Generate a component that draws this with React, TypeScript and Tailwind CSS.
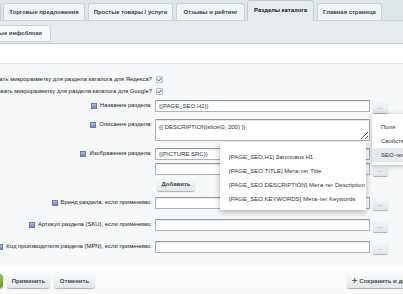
import React from "react";

function Hint() {
  return (
    <span className="inline-block w-[6px] h-[6px] mr-[3px] shrink-0 border border-[#6d79b5] bg-gradient-to-b from-[#b4bdea] to-[#7481c6]" />
  );
}

function Check() {
  return (
    <div className="w-[7px] h-[7px] ml-[1px] rounded-[1px] border border-[#b7bec2] bg-[#eceff0] flex items-center justify-center">
      <svg width="5" height="5" viewBox="0 0 5 5">
        <path d="M0.6 2.5 L2 3.9 L4.5 0.9" fill="none" stroke="#55606a" strokeWidth="1" />
      </svg>
    </div>
  );
}

function Dots() {
  return (
    <div className="w-[15px] h-[13px] ml-[3px] shrink-0 self-center rounded-[2px] bg-gradient-to-b from-[#f8fafa] to-[#e0e5e7] shadow-[0_1px_1px_rgba(0,0,0,0.3)] flex items-center justify-center text-[6px] leading-none text-[#6b767c]">
      ...
    </div>
  );
}

function Field({ value = "" }: { value?: string }) {
  return (
    <input
      readOnly
      value={value}
      className="block w-[215px] h-[12px] border border-[#aab3b8] border-t-[#939ea4] bg-white rounded-[1px] px-[3px] text-[6px] text-[#333] shadow-[inset_0_1px_1px_rgba(0,0,0,0.1)] outline-none"
    />
  );
}

function Label({ children, icon = true }: { children: React.ReactNode; icon?: boolean }) {
  return (
    <div className="w-[152px] shrink-0 flex justify-end items-center whitespace-nowrap text-[5.9px] leading-[9px] text-[#222] pt-[1px]">
      {icon && <Hint />}
      <span>{children}</span>
    </div>
  );
}

export default function App() {
  return (
    <div className="w-[403px] h-[294px] overflow-hidden relative bg-[#eef1f2] font-['Liberation_Sans',Arial,sans-serif]">
      {/* tab bar */}
      <div className="h-[21px] bg-[#dfe6e9] border-b border-[#cbd4d8] flex items-end whitespace-nowrap text-[5.9px] text-[#36434b]">
        <div className="w-[1px] shrink-0 flex justify-end">
          <div className="shrink-0 h-[17px] w-[20px] border border-b-0 border-[#c9d2d6] bg-[#f1f4f5] rounded-t-[3px]" />
        </div>
        <div className="ml-[2px] w-[82px] h-[17px] shrink-0 border border-b-0 border-[#c9d2d6] bg-[#f1f4f5] rounded-t-[3px] flex items-center justify-center font-bold">
          Торговые предложения
        </div>
        <div className="ml-[3px] w-[85px] h-[17px] shrink-0 border border-b-0 border-[#c9d2d6] bg-[#f1f4f5] rounded-t-[3px] flex items-center justify-center font-bold">
          Простые товары / услуги
        </div>
        <div className="ml-[3px] w-[69px] h-[17px] shrink-0 border border-b-0 border-[#c9d2d6] bg-[#f1f4f5] rounded-t-[3px] flex items-center justify-center font-bold">
          Отзывы и рейтинг
        </div>
        <div className="ml-[2px] w-[67px] h-[21px] -mb-px relative shrink-0 border border-b-0 border-[#c4ced2] bg-[#e7edef] rounded-t-[3px] flex items-center justify-center font-bold text-[#111] pb-[2px]">
          Разделы каталога
        </div>
        <div className="ml-[3px] w-[65px] h-[17px] shrink-0 border border-b-0 border-[#c9d2d6] bg-[#f1f4f5] rounded-t-[3px] flex items-center justify-center font-bold">
          Главная страница
        </div>
      </div>

      {/* sub tab bar */}
      <div className="h-[23px] bg-[#e7edef] border-b border-[#c3cdd1] flex items-end pb-[1px] whitespace-nowrap text-[5.9px] text-[#36434b]">
        <div className="w-[51px] shrink-0 flex justify-end">
          <div className="shrink-0 h-[17px] px-[8px] border border-[#cbd3d6] bg-[#f7f9f9] rounded-t-[3px] flex items-center font-bold">
            Основные инфоблоки
          </div>
        </div>
      </div>

      {/* white strip */}
      <div className="h-[20px] bg-white border-b border-[#e1e5e7]" />

      {/* content */}
      <div className="bg-[#f5f7f8] pt-[9px] pb-[12px]">
        <div className="flex h-[12px] items-center">
          <Label icon={false}>Выдавать микроразметку для раздела каталога для Яндекса?</Label>
          <div className="ml-[3px]"><Check /></div>
        </div>
        <div className="flex h-[12px] items-center">
          <Label icon={false}>Выдавать микроразметку для раздела каталога для Google?</Label>
          <div className="ml-[3px]"><Check /></div>
        </div>

        <div className="flex items-start mt-[3px]">
          <Label>Название раздела:</Label>
          <div className="ml-[3px]"><Field value="{{PAGE_SEO.H1}}" /></div>
          <Dots />
        </div>

        <div className="flex items-start mt-[6px]">
          <Label>Описание раздела:</Label>
          <div className="ml-[3px]">
            <textarea
              readOnly
              defaultValue="{{ DESCRIPTION|slice(0, 200) }}"
              className="block w-[215px] h-[22px] border border-[#aab3b8] border-t-[#939ea4] bg-white rounded-[1px] px-[3px] pt-[3px] text-[6px] leading-[8px] text-[#333] shadow-[inset_0_1px_1px_rgba(0,0,0,0.1)] outline-none"
            />
          </div>
          <Dots />
        </div>

        <div className="flex items-start mt-[7px]">
          <Label>Изображения раздела:</Label>
          <div className="ml-[3px] flex flex-col gap-[3px]">
            <Field value="{{PICTURE.SRC}}" />
            <Field />
            <div className="ml-[2px] w-[38px] h-[13px] rounded-[3px] bg-gradient-to-b from-[#fbfcfc] to-[#e1e6e8] shadow-[0_1px_1px_rgba(0,0,0,0.3)] flex items-center justify-center text-[6px] font-bold text-[#3c464d]">
              Добавить
            </div>
          </div>
          <Dots />
        </div>

        <div className="flex items-start mt-[6px]">
          <Label>Бренд раздела, если применимо:</Label>
          <div className="ml-[3px]"><Field /></div>
          <Dots />
        </div>

        <div className="flex items-start mt-[9px]">
          <Label>Артикул раздела (SKU), если применимо:</Label>
          <div className="ml-[3px]"><Field /></div>
          <Dots />
        </div>

        <div className="flex items-start mt-[9px]">
          <Label>Код производителя раздела (MPN), если применимо:</Label>
          <div className="ml-[3px]"><Field /></div>
          <Dots />
        </div>
      </div>

      {/* footer */}
      <div className="h-[30px] bg-gradient-to-b from-[#fdfdfd] to-[#f6f8f8] border-b border-[#d2d8db] flex items-start pt-[8px] whitespace-nowrap text-[6px] font-bold">
        <div className="w-[3px] shrink-0 flex justify-end">
          <div className="shrink-0 w-[50px] h-[14px] rounded-[3px] bg-gradient-to-b from-[#9cc53a] to-[#76a011] shadow-[0_1px_1px_rgba(0,0,0,0.3)] flex items-center justify-center text-white">
            Сохранить
          </div>
        </div>
        <div className="ml-[4px] w-[43px] h-[14px] shrink-0 rounded-[3px] bg-gradient-to-b from-[#fbfcfc] to-[#e1e6e8] shadow-[0_1px_1px_rgba(0,0,0,0.3)] flex items-center justify-center text-[#3c464d]">
          Применить
        </div>
        <div className="ml-[4px] w-[41px] h-[14px] shrink-0 rounded-[3px] bg-gradient-to-b from-[#fbfcfc] to-[#e1e6e8] shadow-[0_1px_1px_rgba(0,0,0,0.3)] flex items-center justify-center text-[#3c464d]">
          Отменить
        </div>
        <div className="ml-auto w-[56px] shrink-0 flex">
          <div className="shrink-0 h-[14px] pl-[5px] pr-[8px] rounded-[3px] bg-gradient-to-b from-[#fbfcfc] to-[#e1e6e8] shadow-[0_1px_1px_rgba(0,0,0,0.3)] flex items-center text-[#3c464d]">
            <span className="text-[9px] font-bold leading-none mr-[2px] text-[#4a555c]">+</span>
            Сохранить и добавить
          </div>
        </div>
      </div>

      {/* popup menu */}
      <div className="absolute left-[372px] top-[114px] w-[60px] bg-white shadow-[0_1px_5px_rgba(0,0,0,0.28)] pt-[6px] pb-[3px] text-[6px] text-[#333] whitespace-nowrap">
        <div className="h-[14px] leading-[14px] pl-[9px]">Поля</div>
        <div className="h-[14px] leading-[14px] pl-[9px]">Свойства</div>
        <div className="h-[14px] leading-[14px] pl-[9px] bg-[#e5eaec]">SEO-теги</div>
      </div>

      {/* sub menu */}
      <div className="absolute left-[220px] top-[142px] w-[146px] bg-white shadow-[0_2px_6px_rgba(0,0,0,0.28)] pt-[8px] pb-[4px] text-[6px] text-[#333] whitespace-nowrap">
        <div className="h-[14px] leading-[14px] pl-[9px]">[PAGE_SEO.H1] Заголовок H1</div>
        <div className="h-[14px] leading-[14px] pl-[9px]">[PAGE_SEO.TITLE] Мета-тег Title</div>
        <div className="h-[14px] leading-[14px] pl-[9px]">[PAGE_SEO.DESCRIPTION] Мета-тег Description</div>
        <div className="h-[14px] leading-[14px] pl-[9px]">[PAGE_SEO.KEYWORDS] Мета-тег Keywords</div>
      </div>
    </div>
  );
}
